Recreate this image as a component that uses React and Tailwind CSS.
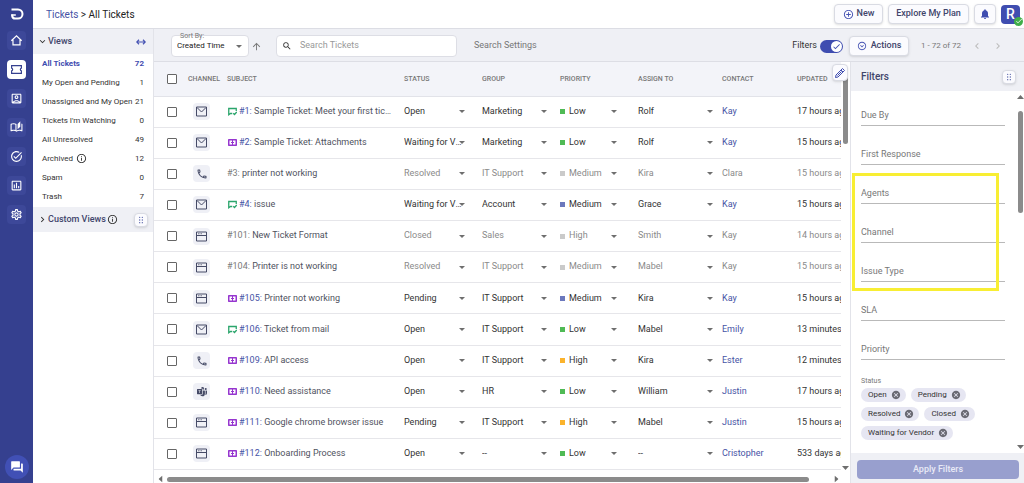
import { useState } from "react";
import {
  MdAddCircleOutline,
  MdArrowUpward,
  MdCancel,
  MdCheck,
  MdChevronLeft,
  MdChevronRight,
  MdExpandMore,
  MdForum,
  MdInfoOutline,
  MdNotifications,
  MdOutlineAccountBox,
  MdOutlineAutoStories,
  MdOutlineExpandCircleDown,
  MdOutlineInsertChart,
  MdOutlinePhone,
  MdOutlineSettings,
  MdSearch,
  MdTaskAlt,
} from "react-icons/md";
import { BsMicrosoftTeams } from "react-icons/bs";

const views = [
  { name: "All Tickets", count: 72, active: true },
  { name: "My Open and Pending", count: 1 },
  { name: "Unassigned and My Open", count: 21 },
  { name: "Tickets I'm Watching", count: 0 },
  { name: "All Unresolved", count: 49 },
  { name: "Archived", count: 12, info: true },
  { name: "Spam", count: 0 },
  { name: "Trash", count: 7 },
];

const tickets = [
  { id: 1, channel: "mail", mark: "reply", subject: "Sample Ticket: Meet your first ticket", status: "Open", group: "Marketing", priority: "Low", agent: "Rolf", contact: "Kay", updated: "17 hours ago" },
  { id: 2, channel: "mail", mark: "new", subject: "Sample Ticket: Attachments", status: "Waiting for Vendor", group: "Marketing", priority: "Low", agent: "Rolf", contact: "Kay", updated: "15 hours ago" },
  { id: 3, channel: "phone", subject: "printer not working", status: "Resolved", group: "IT Support", priority: "Medium", agent: "Kira", contact: "Clara", updated: "15 hours ago", done: true },
  { id: 4, channel: "mail", mark: "reply", subject: "issue", status: "Waiting for Vendor", group: "Account", priority: "Medium", agent: "Grace", contact: "Kay", updated: "15 hours ago" },
  { id: 101, channel: "web", subject: "New Ticket Format", status: "Closed", group: "Sales", priority: "High", agent: "Smith", contact: "Kay", updated: "14 hours ago", done: true },
  { id: 104, channel: "web", subject: "Printer is not working", status: "Resolved", group: "IT Support", priority: "Medium", agent: "Mabel", contact: "Kay", updated: "15 hours ago", done: true },
  { id: 105, channel: "web", mark: "new", subject: "Printer not working", status: "Pending", group: "IT Support", priority: "Medium", agent: "Kira", contact: "Kay", updated: "15 hours ago" },
  { id: 106, channel: "mail", mark: "reply", subject: "Ticket from mail", status: "Open", group: "IT Support", priority: "Low", agent: "Mabel", contact: "Emily", updated: "13 minutes ago" },
  { id: 109, channel: "phone", mark: "new", subject: "API access", status: "Open", group: "IT Support", priority: "High", agent: "Kira", contact: "Ester", updated: "12 minutes ago" },
  { id: 110, channel: "teams", mark: "new", subject: "Need assistance", status: "Open", group: "HR", priority: "Low", agent: "William", contact: "Justin", updated: "17 hours ago" },
  { id: 111, channel: "web", mark: "new", subject: "Google chrome browser issue", status: "Pending", group: "IT Support", priority: "High", agent: "Mabel", contact: "Justin", updated: "15 hours ago" },
  { id: 112, channel: "web", mark: "new", subject: "Onboarding Process", status: "Open", group: "--", priority: "Low", agent: "--", contact: "Cristopher", updated: "533 days ago" },
];

const fields = ["Due By", "First Response", "Agents", "Channel", "Issue Type", "SLA", "Priority"];
const statuses = ["Open", "Pending", "Resolved", "Closed", "Waiting for Vendor"];

const priorityColors = {
  Low: "bg-[#4fba55]",
  Medium: "bg-[#6b78bd]",
  High: "bg-[#fbb32c]",
};

const cardButton =
  "flex shrink-0 items-center justify-center rounded border border-[#d9dbe3] bg-[#fbfbfe] font-medium text-[#41456b] shadow-sm";

function Logo() {
  return (
    <svg viewBox="0 0 14 14" className="size-3.5" fill="none" stroke="#fff" strokeWidth="2">
      <path d="M1.500 2.500H8a4.500 4.500 0 0 1 0 9H5.500A3 3 0 0 1 2.200 9V7.500" />
      <path d="M1.200 8h4.600" strokeWidth="1.500" />
    </svg>
  );
}

function HomeIcon() {
  return (
    <svg viewBox="0 0 24 24" className="size-[13px]" fill="none" stroke="currentColor" strokeWidth="2.200">
      <path d="M2.500 12.500 12 3.500l9.500 9M5.500 10.500V20h13v-9.500" />
    </svg>
  );
}

function TicketIcon() {
  return (
    <svg viewBox="0 0 24 24" className="size-[13px]" fill="none" stroke="currentColor" strokeWidth="2.200">
      <path d="M3 5h18v4.500a2.600 2.600 0 0 0 0 5V19H3v-4.500a2.600 2.600 0 0 0 0-5z" />
    </svg>
  );
}

function ResizeIcon() {
  return (
    <svg viewBox="0 0 20 12" className="h-1.5 w-2.5" fill="none" stroke="#4653b3" strokeWidth="2.400">
      <path d="M2 6h16M6 1.500 1.500 6 6 10.500M14 1.500 18.500 6 14 10.500" />
    </svg>
  );
}

function MailIcon() {
  return (
    <svg viewBox="0 0 22 22" className="size-[11px]" fill="none" stroke="currentColor" strokeWidth="2">
      <path d="M1 2h20v18H1zM2 3l9 9 9-9" />
    </svg>
  );
}

function WebIcon() {
  return (
    <svg viewBox="0 0 22 22" className="size-[11px]" fill="none" stroke="currentColor" strokeWidth="2">
      <path d="M1 2h20v18H1zM1 9h20" />
      <path d="M4 5.500h3M9 5.500h3" strokeWidth="1.500" />
    </svg>
  );
}

function PencilIcon() {
  return (
    <svg viewBox="0 0 24 24" className="size-3" fill="none" stroke="#3f4db0" strokeWidth="2" strokeLinejoin="round">
      <path d="M3 21l1-5L17 3l4 4L8 20zM14 6l4 4M7 17l8-8" />
    </svg>
  );
}

function MarkIcon({ mark }) {
  if (mark === "reply") {
    return (
      <svg viewBox="0 0 18 18" className="size-[9px] shrink-0" fill="none" stroke="#2aa56b" strokeWidth="2.600">
        <path d="M16.500 8V3h-15v12.500L5 13h3.500" />
        <path d="m10.500 12.500 2.500 2.500 4.500-5" />
      </svg>
    );
  }
  return (
    <svg viewBox="0 0 18 18" className="size-[9px] shrink-0">
      <rect y="2" width="18" height="14" rx="1.500" fill="#9636cf" />
      <path d="M3 5h5v3H6v2h2v3H3zM15 5h-5v3h2v2h-2v3h5z" fill="#fff" />
    </svg>
  );
}

function Caret({ className = "h-[3px] w-1.5" }) {
  return (
    <svg viewBox="0 0 8 4" preserveAspectRatio="none" className={`shrink-0 ${className}`} fill="#6e6e6e">
      <path d="M0 0h8L4 4z" />
    </svg>
  );
}

function DragDots() {
  return (
    <svg viewBox="0 0 8 12" className="h-2 w-1.5" fill="#5560a8">
      {[2, 6, 10].map((y) => (
        <g key={y}>
          <circle cx="2" cy={y} r="1" />
          <circle cx="6" cy={y} r="1" />
        </g>
      ))}
    </svg>
  );
}

function ChannelIcon({ channel }) {
  return (
    <span className="flex size-[17px] items-center justify-center rounded bg-[#eff0f6] text-[#454a66]">
      {channel === "mail" && <MailIcon />}
      {channel === "web" && <WebIcon />}
      {channel === "phone" && <MdOutlinePhone className="size-3" />}
      {channel === "teams" && <BsMicrosoftTeams className="size-2.5" />}
    </span>
  );
}

function CellSelect({ label, value, className, children }) {
  return (
    <div className={`flex items-center ${className}`}>
      {children}
      <select
        aria-label={label}
        defaultValue={value}
        className="h-4 min-w-0 flex-1 appearance-none overflow-hidden text-ellipsis whitespace-nowrap bg-transparent"
      >
        <option>{value}</option>
      </select>
      <Caret className="pointer-events-none -ml-1 h-[3px] w-1.5" />
    </div>
  );
}

function Checkbox({ label }) {
  return (
    <input
      type="checkbox"
      aria-label={label}
      className="block size-2.5 appearance-none rounded-[1px] border border-[#666] bg-white checked:bg-[#3f4db0]"
    />
  );
}

function NavRail() {
  const items = [
    { label: "Home", icon: <HomeIcon /> },
    { label: "Tickets", icon: <TicketIcon />, active: true },
    { label: "Contacts", icon: <MdOutlineAccountBox className="size-[13px]" /> },
    { label: "Knowledge base", icon: <MdOutlineAutoStories className="size-[13px]" /> },
    { label: "Tasks", icon: <MdTaskAlt className="size-[13px]" /> },
    { label: "Reports", icon: <MdOutlineInsertChart className="size-[13px]" /> },
    { label: "Settings", icon: <MdOutlineSettings className="size-[13px]" /> },
  ];

  return (
    <nav className="flex w-[33px] shrink-0 flex-col items-center bg-[#35408f] pb-1">
      <div className="flex h-7 items-center">
        <Logo />
      </div>
      <div className="mt-[3px] flex flex-col gap-2.5">
        {items.map((item) => (
          <button
            key={item.label}
            aria-label={item.label}
            className={`flex size-[19px] items-center justify-center rounded ${
              item.active ? "bg-white text-[#35408f]" : "bg-[#3d4899] text-white"
            }`}
          >
            {item.icon}
          </button>
        ))}
      </div>
      <button aria-label="Chat" className="mt-auto flex size-6 items-center justify-center rounded-full bg-[#4150b5] text-white">
        <MdForum className="size-3.5" />
      </button>
    </nav>
  );
}

function TopBar() {
  return (
    <header className="flex h-[29px] shrink-0 items-center border-b border-[#dcdde4] pr-1 pl-[13px]">
      <h1 className="text-[10px] text-[#222]">
        <a href="#tickets" className="text-[#4653a5]">Tickets</a> &gt; All Tickets
      </h1>
      <div className="ml-auto flex items-center gap-[5px] text-[9px]">
        <button className={`${cardButton} h-5 w-[49px] gap-[3px]`}>
          <MdAddCircleOutline className="size-[11px] text-[#4653b3]" />
          New
        </button>
        <button className={`${cardButton} h-5 w-[81px]`}>Explore My Plan</button>
        <button aria-label="Notifications" className={`${cardButton} h-5 w-[22px]`}>
          <MdNotifications className="size-3 text-[#3f4db0]" />
        </button>
        <button className="relative flex size-[19px] items-center justify-center rounded bg-[#3f4db0] text-sm font-medium text-white">
          R
          <span className="absolute -right-[3px] -bottom-0.5 flex size-[9px] items-center justify-center rounded-full bg-[#3fae49]">
            <MdCheck className="size-2" />
          </span>
        </button>
      </div>
    </header>
  );
}

function ViewsPanel() {
  return (
    <aside className="w-[121px] shrink-0 border-r border-[#e2e3e9] text-[8px] text-[#333]">
      <div className="flex h-[25px] items-center bg-[#eff0f5] pr-[7px] pl-1">
        <MdExpandMore className="size-[11px]" />
        <h2 className="text-[9px] font-medium text-[#41456b]">Views</h2>
        <button aria-label="Resize panel" className="ml-auto">
          <ResizeIcon />
        </button>
      </div>
      <ul className="pb-px">
        {views.map((view) => (
          <li key={view.name}>
            <a
              href="#view"
              className={`flex h-[19px] items-center pr-[9px] pl-[9px] whitespace-nowrap ${
                view.active ? "font-bold text-[#3f4db0]" : ""
              }`}
            >
              {view.name}
              {view.info && <MdInfoOutline className="ml-[3px] size-[11px]" />}
              <span className="ml-auto">{view.count}</span>
            </a>
          </li>
        ))}
      </ul>
      <div className="flex h-[25px] items-center bg-[#eff0f5] pr-[5px] pl-1">
        <MdChevronRight className="size-[11px]" />
        <h2 className="text-[9px] font-medium text-[#41456b]">Custom Views</h2>
        <MdInfoOutline className="ml-px size-[11px]" />
        <button aria-label="Arrange views" className={`${cardButton} ml-auto size-[14px]`}>
          <DragDots />
        </button>
      </div>
    </aside>
  );
}

function Toolbar({ showFilters, setShowFilters }) {
  return (
    <div className="flex h-[33px] shrink-0 items-center border-b border-[#dddee5] bg-[#eff0f5] pt-0.5 pr-5 pl-[17px] text-[9px] text-[#777]">
      <div className="relative flex h-[22px] w-[78px] items-center rounded border border-[#dddee5] bg-white pr-1.5 pl-[5px]">
        <label htmlFor="sort" className="absolute -top-1 left-[7px] px-px text-[7px] leading-[8px]">Sort By:</label>
        <select id="sort" className="min-w-0 flex-1 appearance-none text-[8px] text-[#222]">
          <option>Created Time</option>
        </select>
        <Caret />
      </div>
      <button aria-label="Sort ascending" className="ml-0.5">
        <MdArrowUpward className="size-[11px]" />
      </button>
      <div className="ml-[14px] flex h-[22px] w-[181px] items-center gap-2 rounded border border-[#dddee5] bg-white px-[5px]">
        <MdSearch className="size-2.5 shrink-0 text-[#333]" />
        <input aria-label="Search tickets" placeholder="Search Tickets" className="min-w-0 flex-1 outline-none placeholder:text-[#999]" />
      </div>
      <button className="ml-[17px]">Search Settings</button>

      <label className="ml-auto flex items-center gap-[3px] text-[#333]">
        Filters
        <span className="relative flex items-center">
          <input
            type="checkbox"
            role="switch"
            checked={showFilters}
            onChange={(e) => setShowFilters(e.target.checked)}
            className="h-[13px] w-[23px] appearance-none rounded-full bg-gray-400 checked:bg-[#3f4db0]"
          />
          <span className={`pointer-events-none absolute flex size-[11px] items-center justify-center rounded-full bg-white ${showFilters ? "right-px" : "left-px"}`}>
            <MdCheck className="size-[9px] text-[#3f4db0]" />
          </span>
        </span>
      </label>
      <button className={`${cardButton} ml-1.5 h-5 w-[60px] gap-1`}>
        <MdOutlineExpandCircleDown className="size-2.5 text-[#4653b3]" />
        Actions
      </button>
      <span className="ml-3 text-[8px]">1 - 72 of 72</span>
      <button aria-label="Previous page" className="ml-2.5 text-[#bbb]">
        <MdChevronLeft className="size-3" />
      </button>
      <button aria-label="Next page" className="ml-[9px] text-[#bbb]">
        <MdChevronRight className="size-3" />
      </button>
    </div>
  );
}

function TicketRow({ ticket }) {
  const muted = ticket.done;
  return (
    <tr className={`border-b border-[#e6e6ea] ${muted ? "text-[#8a8a8a]" : "text-[#333]"}`}>
      <td className="pl-[13px]">
        <Checkbox label={`Select ticket ${ticket.id}`} />
      </td>
      <td className="pl-[5px]">
        <ChannelIcon channel={ticket.channel} />
      </td>
      <td>
        <div className="flex items-center">
          {ticket.mark && (
            <span className="flex w-3 shrink-0 pl-px">
              <MarkIcon mark={ticket.mark} />
            </span>
          )}
          <a href="#ticket" className="w-[155px] truncate text-[#4f5260]">
            <span className={muted ? "text-[#7a7a7a]" : "text-[#4653a5]"}>#{ticket.id}:</span> {ticket.subject}
          </a>
        </div>
      </td>
      <td><CellSelect label="Status" value={ticket.status} className="pr-[17px]" /></td>
      <td><CellSelect label="Group" value={ticket.group} className="pr-[13px]" /></td>
      <td>
        <CellSelect label="Priority" value={ticket.priority} className="pr-[21px]">
          <span className={`mr-1 size-[5px] shrink-0 ${muted ? "bg-[#cacaca]" : priorityColors[ticket.priority]}`} />
        </CellSelect>
      </td>
      <td><CellSelect label="Assign to" value={ticket.agent} className="pr-[9px]" /></td>
      <td>
        <a href="#contact" className={muted ? "" : "text-[#4653a5]"}>{ticket.contact}</a>
      </td>
      <td>{ticket.updated}</td>
    </tr>
  );
}

function TicketTable() {
  return (
    <section className="relative flex min-w-0 flex-1 flex-col border-r border-[#e2e3e9]">
      <div className="flex min-h-0 flex-1">
        <div className="min-w-0 flex-1 overflow-hidden">
          <table className="h-full w-[760px] table-fixed text-left text-[9px] whitespace-nowrap">
            <colgroup>
              <col className="w-[34px]" />
              <col className="w-[39px]" />
              <col className="w-[177px]" />
              <col className="w-[78px]" />
              <col className="w-[78px]" />
              <col className="w-[78px]" />
              <col className="w-[84px]" />
              <col className="w-[75px]" />
              <col />
            </colgroup>
            <thead>
              <tr className="h-[34px] border-b border-[#e2e3e9] bg-[#f3f4f9] text-[7px] text-[#777]">
                <th className="pl-[13px]"><Checkbox label="Select all tickets" /></th>
                <th className="font-medium">CHANNEL</th>
                <th className="font-medium">SUBJECT</th>
                <th className="font-medium">STATUS</th>
                <th className="font-medium">GROUP</th>
                <th className="font-medium">PRIORITY</th>
                <th className="font-medium">ASSIGN TO</th>
                <th className="font-medium">CONTACT</th>
                <th className="font-medium">UPDATED</th>
              </tr>
            </thead>
            <tbody>
              {tickets.map((ticket) => (
                <TicketRow key={ticket.id} ticket={ticket} />
              ))}
            </tbody>
          </table>
        </div>
        <div className="flex w-[9px] flex-col items-center pt-3.5">
          <div className="h-[68px] w-[5px] rounded-full bg-[#8b8b8b]" />
          <Caret className="mt-auto h-1 w-[7px]" />
        </div>
      </div>
      <div className="flex h-[13px] shrink-0 items-end gap-[3px] pr-2.5 pb-px pl-[3px]">
        <Caret className="mb-px h-1 w-[7px] rotate-90" />
        <div className="h-[5px] w-[94%] rounded-full bg-[#8b8b8b]" />
        <Caret className="mb-px ml-auto h-1 w-[7px] -rotate-90" />
      </div>
      <button aria-label="Edit columns" className={`${cardButton} absolute top-0.5 right-0.5 h-[17px] w-4`}>
        <PencilIcon />
      </button>
    </section>
  );
}

function FiltersPanel() {
  return (
    <aside className="relative flex w-[173px] shrink-0 flex-col text-[#777]">
      <div className="flex h-[29px] shrink-0 items-center bg-[#eff0f5] pr-2 pl-2.5">
        <h2 className="text-[10px] font-medium text-[#41456b]">Filters</h2>
        <button aria-label="Arrange filters" className={`${cardButton} ml-auto size-[14px]`}>
          <DragDots />
        </button>
      </div>
      <div className="flex min-h-0 flex-1 overflow-hidden">
        <div className="min-w-0 flex-1 pl-2.5">
          {fields.map((field) => (
            <div key={field} className="flex h-[39px] flex-col justify-end first:h-[35px]">
              <input
                aria-label={field}
                placeholder={field}
                className="h-[21px] w-full border-b border-[#b9b9b9] text-[9px] outline-none placeholder:text-[#777]"
              />
            </div>
          ))}
          <p className="mt-[17px] text-[7px] leading-[8px]">Status</p>
          <div className="mt-[3px] flex flex-wrap gap-x-[5px] gap-y-[5px] text-[8px] text-[#333]">
            {statuses.map((status) => (
              <span key={status} className="flex h-[14px] items-center gap-1 rounded-full bg-[#e6e6f2] pr-[5px] pl-[7px]">
                {status}
                <button aria-label={`Remove ${status}`}>
                  <MdCancel className="size-2.5 text-[#6b6b74]" />
                </button>
              </span>
            ))}
          </div>
        </div>
        <div className="ml-3 flex w-[7px] shrink-0 flex-col items-center pt-1">
          <Caret className="h-1 w-[7px] rotate-180" />
          <div className="mt-3 h-[102px] w-[5px] rounded-full bg-[#8b8b8b]" />
          <Caret className="mt-auto mb-1 h-1 w-[7px]" />
        </div>
      </div>
      <div className="flex shrink-0 bg-[#eff0f5] pt-[7px] pr-[5px] pb-1 pl-1.5">
        <button className="h-[19px] flex-1 rounded bg-[#989fce] text-[9px] font-medium text-[#e9eaf6]">Apply Filters</button>
      </div>
      <div className="pointer-events-none absolute top-[111px] right-[25px] left-px h-[118px] border-[3px] border-[#f8ee33]" />
    </aside>
  );
}

export default function App() {
  const [showFilters, setShowFilters] = useState(true);

  return (
    <div className="flex h-screen overflow-hidden bg-white font-[Roboto,sans-serif]">
      <NavRail />
      <div className="flex min-w-0 flex-1 flex-col">
        <TopBar />
        <div className="flex min-h-0 flex-1">
          <ViewsPanel />
          <main className="flex min-w-0 flex-1 flex-col">
            <Toolbar showFilters={showFilters} setShowFilters={setShowFilters} />
            <div className="flex min-h-0 flex-1">
              <TicketTable />
              {showFilters && <FiltersPanel />}
            </div>
          </main>
        </div>
      </div>
    </div>
  );
}
